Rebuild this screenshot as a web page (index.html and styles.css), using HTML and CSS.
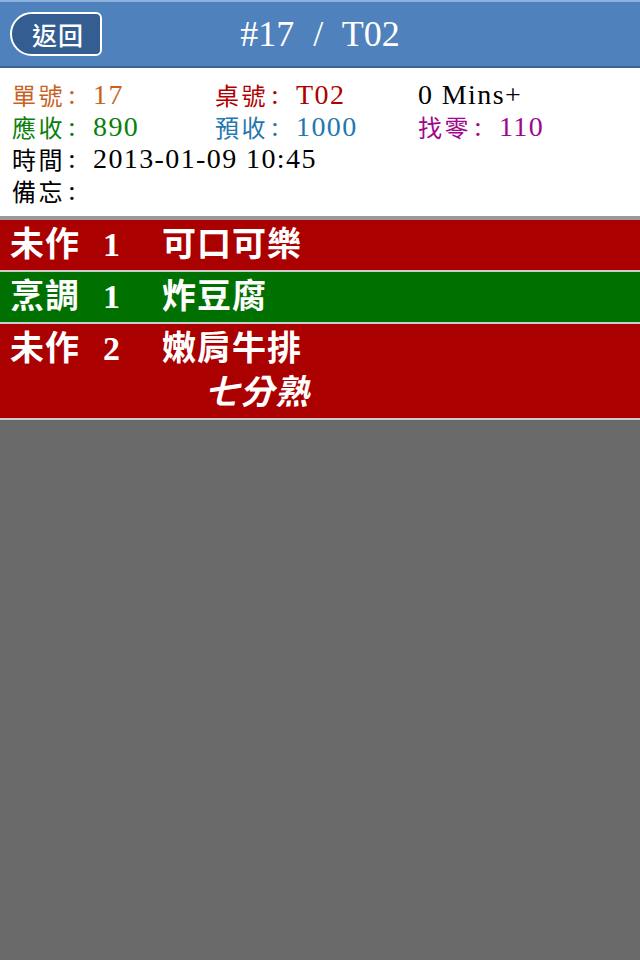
FILE: index.html
```html
<!DOCTYPE html>
<html lang="zh-Hant">
<head>
<meta charset="utf-8">
<title>#17 / T02</title>
<link rel="stylesheet" href="styles.css">
</head>
<body>
<header class="topbar">
  <a class="back-btn" href="#">返回</a>
  <h1 class="title">#17 / T02</h1>
</header>
<section class="info">
  <div class="info-row">
    <span class="c-order"><span class="lbl">單號</span><span class="sep">:</span><span class="val">17</span></span>
    <span class="c-table"><span class="lbl">桌號</span><span class="sep">:</span><span class="val">T02</span></span>
    <span class="c-time"><span class="val">0 Mins+</span></span>
  </div>
  <div class="info-row">
    <span class="c-due"><span class="lbl">應收</span><span class="sep">:</span><span class="val">890</span></span>
    <span class="c-paid"><span class="lbl">預收</span><span class="sep">:</span><span class="val">1000</span></span>
    <span class="c-change"><span class="lbl">找零</span><span class="sep">:</span><span class="val">110</span></span>
  </div>
  <div class="info-line"><span class="lbl">時間</span><span class="sep">:</span><span class="val">2013-01-09 10:45</span></div>
  <div class="info-line"><span class="lbl">備忘</span><span class="sep">:</span></div>
</section>
<ul class="items">
  <li class="item pending">
    <div class="item-main"><span class="status">未作</span><span class="qty">1</span><span class="name">可口可樂</span></div>
  </li>
  <li class="item cooking">
    <div class="item-main"><span class="status">烹調</span><span class="qty">1</span><span class="name">炸豆腐</span></div>
  </li>
  <li class="item pending">
    <div class="item-main"><span class="status">未作</span><span class="qty">2</span><span class="name">嫩肩牛排</span></div>
    <div class="note">七分熟</div>
  </li>
</ul>
</body>
</html>
```
FILE: styles.css
```css
html, body {
  margin: 0;
  padding: 0;
}
body {
  background: #696969;
  font-family: "Liberation Serif", "Noto Sans CJK TC", serif;
  min-height: 960px;
}
.topbar {
  position: relative;
  height: 64px;
  background: #4f81bd;
  border-top: 2px solid #8db1dd;
  border-bottom: 2px solid #3b6596;
  display: flex;
  align-items: center;
  justify-content: center;
}
.back-btn {
  position: absolute;
  left: 10px;
  top: 10px;
  width: 84px;
  height: 40px;
  padding-left: 4px;
  border: 2px solid #ffffff;
  border-radius: 22px 6px 6px 22px;
  background: #345d92;
  color: #ffffff;
  text-decoration: none;
  font-family: "Noto Sans CJK TC", sans-serif;
  font-size: 25px;
  font-weight: 500;
  letter-spacing: 1px;
  display: flex;
  align-items: center;
  justify-content: center;
}
.title {
  margin: 0;
  font-weight: normal;
  color: #ffffff;
  font-size: 36px;
  word-spacing: 10px;
}
.info {
  background: #ffffff;
  padding: 11px 12px 9px;
  border-bottom: 4px solid #999999;
  color: #000000;
}
.info-row {
  display: grid;
  grid-template-columns: 203px 203px 1fr;
  height: 32px;
}
.info-line {
  height: 32px;
}
.lbl, .sep, .val {
  display: inline-block;
  vertical-align: top;
  line-height: 32px;
  height: 32px;
}
.lbl {
  font-family: "Noto Sans CJK TC", sans-serif;
  font-size: 24px;
  letter-spacing: 2.5px;
}
.sep {
  width: 28px;
  padding-left: 3px;
  box-sizing: border-box;
  font-family: "Liberation Serif", serif;
  font-size: 28px;
}
.val {
  font-family: "Liberation Serif", serif;
  font-size: 28px;
  letter-spacing: 1.4px;
}
.c-order { color: #c8621e; }
.c-table { color: #b00000; }
.c-time { color: #000000; }
.c-due { color: #0a800a; }
.c-paid { color: #1f78b0; }
.c-change { color: #a0078c; }
.items {
  list-style: none;
  margin: 0;
  padding: 0;
}
.item {
  padding: 3px 10px;
  border-bottom: 2px solid #cccccc;
  color: #ffffff;
  font-size: 34px;
  line-height: 44px;
  font-weight: bold;
}
.item.pending { background: #aa0000; }
.item.cooking { background: #007000; }
.item-main {
  display: flex;
}
.status {
  width: 93px;
  letter-spacing: 1px;
}
.qty { width: 59px; }
.name { letter-spacing: 1px; }
.note {
  padding-left: 195px;
  font-style: italic;
  font-weight: bold;
  letter-spacing: 1px;
}
```
